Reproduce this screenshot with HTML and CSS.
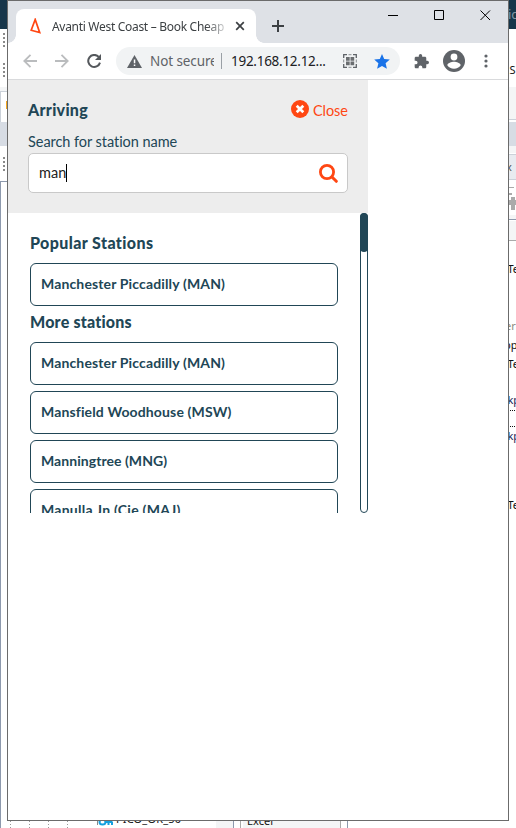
FILE: index.html
```html
<!DOCTYPE html>
<html lang="en">
<head>
<meta charset="utf-8">
<title>Avanti West Coast – Book Cheap</title>
<link rel="stylesheet" href="styles.css">
</head>
<body>
<div class="desktop">
  <div class="behind" aria-hidden="true">
    <svg width="516" height="828" viewBox="0 0 516 828">
      <path fill="#17364a" d="M0 0h8v29H0zM508 0h8v29h-8z"/>
      <path fill="#f4f5f6" d="M0 87h8v4H0zM508 87h8v33h-8zM508 145h8v8h-8zM508 215h8v4h-8zM508 221h8v19h-8zM216 820h17v8h-17zM243 820h97v8h-97z"/>
      <path fill="#d7dce4" d="M0 122h8v24H0zM508 122h8v24h-8z"/>
      <path fill="#e8ebf0" d="M508 154h8v25h-8z"/>
      <path fill="none" stroke="#8d99ad" d="M0 181.500h8M.5 181v647M508 219.500h8M233.500 820v8M347.500 820v8"/>
      <path fill="none" stroke="#cbd1d9" d="M.5 91v31M0 91.500h8M508 119.500h8M508 154.500h8M508 179.500h8"/>
      <path fill="none" stroke="#aaa" d="M508 240.500h8M240.500 820v8M340.500 820v8"/>
      <path fill="none" stroke="#8a8a8a" stroke-width="2" stroke-dasharray="2 2" d="M4 33v15M4 63v15M4 157v15"/>
      <path fill="none" stroke="#999" stroke-dasharray="1 2" d="M10.500 821v7M29.500 821v7M48.500 821v7M67.500 821v7"/>
      <path fill="none" stroke="#111" stroke-dasharray="1 1" d="M508 410.500h8M508 426.500h8"/>
      <path fill="#f5a820" d="M6 101h1v8H6z"/>
      <path fill="#aaa" d="M508 187h6v1h-6zM508 193h4v2h-4zM508 200h8v5h-8zM511 197h4v13h-4z"/>
      <path fill="none" stroke="#15a0df" stroke-width="2" d="M99.500 822a3 2.500 0 1 0 6 0a3 2.500 0 1 0-6 0M105 822h7.500M108.500 822v3M112 822v3"/>
      <path stroke="#888" d="M97.500 820v5"/>
      <text class="scrap scrap-light" x="508" y="19">ic</text>
      <text class="scrap" x="509.500" y="74">S</text>
      <text class="scrap scrap-light2" x="506" y="171">x</text>
      <text class="scrap" x="507.500" y="273">Te</text>
      <text class="scrap scrap-muted" x="505" y="330">er</text>
      <text class="scrap" x="504" y="349">pp</text>
      <text class="scrap" x="507.500" y="368">Te</text>
      <text class="scrap scrap-navy" x="507.500" y="404">kp</text>
      <text class="scrap scrap-navy" x="507.500" y="440">kp</text>
      <text class="scrap" x="507.500" y="509">Te</text>
      <text class="scrap" x="116" y="823" textLength="65">PICO_OR_50</text>
      <text class="scrap" x="247" y="825">Excel</text>
    </svg>
  </div>

  <div class="window">
    <div class="tabstrip">
      <div class="tab">
        <svg class="favicon" width="12" height="16" viewBox="0 0 12 16"><path d="M5.200 1.500 1.200 12.200l8.500 2.400L5.200 1.500Z" fill="none" stroke="#ff4713" stroke-width="1.700"/></svg>
        <span class="tab-title">Avanti West Coast – Book Cheap</span>
        <svg class="tab-close" width="10" height="10" viewBox="0 0 10 10"><path d="m1.200 1.200 7.600 7.600m0-7.600L1.200 8.800" stroke="#3c4043" stroke-width="1.700"/></svg>
      </div>
      <svg class="plus" width="12" height="12" viewBox="0 0 12 12"><path d="M6 0v12M0 6h12" stroke="#3c4043" stroke-width="2"/></svg>
      <div class="controls">
        <svg width="11" height="11" viewBox="0 0 11 11"><path d="M0 5.500h10" stroke="#000"/></svg>
        <svg width="11" height="11" viewBox="0 0 11 11"><path d="M.5.500h9v9h-9z" fill="none" stroke="#000"/></svg>
        <svg width="11" height="11" viewBox="0 0 11 11"><path d="m.5.500 9.500 9.500m0-9.500L.5 10" stroke="#000"/></svg>
      </div>
    </div>

    <div class="toolbar">
      <svg class="back" width="14" height="14" viewBox="0 0 14 14"><path d="M14 7H1.500M7.500.800 1.300 7l6.200 6.200" fill="none" stroke="#babcbe" stroke-width="1.800"/></svg>
      <svg class="forward" width="14" height="14" viewBox="0 0 14 14"><path d="M0 7h12.500M6.500.800 12.700 7l-6.200 6.200" fill="none" stroke="#babcbe" stroke-width="1.800"/></svg>
      <svg class="reload" width="15" height="14" viewBox="0 0 15 14"><path d="M13 8.600A6 6 0 1 1 11.700 2.900" fill="none" stroke="#54585c" stroke-width="2"/><path d="M14 0v6H8z" fill="#54585c"/></svg>
      <div class="omnibox">
        <svg class="warning" width="15" height="13" viewBox="0 0 15 13"><path d="M7.500 0 15 13H0z" fill="#5f6368"/><path d="M6.800 4.500h1.500v3.700H6.800zM6.800 9.500h1.500V11H6.800z" fill="#fff"/></svg>
        <span class="insecure">Not secure</span>
        <span class="divider"></span>
        <span class="url">192.168.12.12...</span>
        <svg class="qr" width="14" height="14" viewBox="0 0 14 14"><path d="M.7 4V.700H4M10 .700h3.300V4M13.300 10v3.300H10M4 13.300H.700V10" fill="none" stroke="#5f6368" stroke-width="1.300"/><path d="M5.500.700h3M5.500 13.300h3M.700 5.500v3M13.300 5.500v3" stroke="#8b8e92"/><path d="M3 3h3.700v3.700H3zM7.500 3h3.700v3.700H7.500zM3 7.500h3.700v3.700H3zM7.500 7.500h3.700v3.700H7.500z" fill="#6a6d70"/></svg>
        <svg class="star" width="16" height="15" viewBox="0 0 16 15"><path d="m8 0 2.200 5.100 5.600.500-4.200 3.700 1.300 5.500L8 11.900l-4.900 2.900 1.300-5.500L.2 5.600l5.600-.5z" fill="#1a73e8"/></svg>
      </div>
      <svg class="puzzle" width="15" height="15" viewBox="1 1 22 22"><path fill="#5f6368" d="M20.500 11H19V7c0-1.100-.9-2-2-2h-4V3.500a2.500 2.500 0 0 0-5 0V5H4c-1.100 0-2 .9-2 2v3.800h1.500a2.700 2.700 0 0 1 0 5.400H2V20c0 1.100.9 2 2 2h3.800v-1.500a2.700 2.700 0 0 1 5.400 0V22H17c1.100 0 2-.9 2-2v-4h1.500a2.500 2.500 0 0 0 0-5z"/></svg>
      <svg class="avatar" width="22" height="22" viewBox="0 0 22 22"><circle cx="11" cy="11" r="11" fill="#5f6368"/><circle cx="11" cy="7" r="3.400" fill="#fff"/><path d="M4.300 15.200c0-2.300 4.400-3.500 6.700-3.500s6.700 1.200 6.700 3.500c-1.400 2.200-3.900 3.600-6.700 3.600s-5.300-1.400-6.700-3.600Z" fill="#fff"/></svg>
      <svg class="dots" width="4" height="14" viewBox="0 0 4 14"><g fill="#5f6368"><circle cx="2" cy="2" r="1.600"/><circle cx="2" cy="7" r="1.600"/><circle cx="2" cy="12" r="1.600"/></g></svg>
    </div>

    <main class="panel">
      <header class="search">
        <div class="heading">
          <h1>Arriving</h1>
          <a class="close"><svg width="18" height="18" viewBox="0 0 18 18"><circle cx="9" cy="9" r="9" fill="#ff4713"/><path d="m5.700 5.700 6.600 6.600m0-6.600-6.600 6.600" stroke="#fff" stroke-width="2.700"/></svg><span>Close</span></a>
        </div>
        <label>Search for station name</label>
        <div class="field">
          <span class="value">man</span><span class="caret"></span>
          <svg class="glass" width="19" height="19" viewBox="0 0 19 19"><circle cx="8" cy="8" r="6.600" fill="none" stroke="#ff4713" stroke-width="2.800"/><path d="m13 13 4.300 4.300" stroke="#ff4713" stroke-width="3" stroke-linecap="round"/></svg>
        </div>
      </header>
      <div class="results">
        <div class="list">
          <h2 class="popular">Popular Stations</h2>
          <div class="station">Manchester Piccadilly (MAN)</div>
          <h2 class="more">More stations</h2>
          <div class="station">Manchester Piccadilly (MAN)</div>
          <div class="station">Mansfield Woodhouse (MSW)</div>
          <div class="station manningtree">Manningtree (MNG)</div>
          <div class="station manulla">Manulla Jn (Cie (MAJ)</div>
        </div>
        <div class="track"><div class="thumb"></div></div>
      </div>
    </main>
  </div>
</div>
</body>
</html>
```
FILE: styles.css
```css
* { box-sizing: border-box; }
body { margin: 0; background: #fff; overflow: hidden; font-variant-ligatures: none; }
svg { display: block; flex: none; }
.desktop { position: relative; width: 516px; height: 828px; overflow: hidden; padding-left: 7px; }
.behind { position: absolute; left: 0; top: 0; }
.scrap { font: 11px "Noto Sans", sans-serif; fill: #111; }
.scrap-light { fill: #8496a4; font-size: 13px; }
.scrap-light2 { fill: #555; }
.scrap-muted { fill: #8b8b7d; }
.scrap-navy { fill: #152457; }

.window { position: relative; width: 502px; height: 821px; border: 1px solid #6b6b6b; background: #fff; }

.tabstrip { display: flex; height: 42px; padding: 8px 17px 0 8px; background: #dee1e6; }
.tab { position: relative; display: flex; align-items: center; width: 240px; height: 34px; padding: 0 11px 0 14px; background: #fff; border-radius: 8px 8px 0 0; font: 12px "Noto Sans", sans-serif; color: #3c4043; }
.tab::before, .tab::after { content: ""; position: absolute; bottom: 0; width: 8px; height: 8px; }
.tab::before { left: -8px; background: radial-gradient(circle at 0 0, transparent 7.5px, #fff 8px); }
.tab::after { right: -8px; background: radial-gradient(circle at 100% 0, transparent 7.5px, #fff 8px); }
.tab-title { width: 174px; margin-left: 10px; overflow: hidden; white-space: nowrap; letter-spacing: -0.3px; -webkit-mask-image: linear-gradient(90deg, #000 154px, transparent 178px); mask-image: linear-gradient(90deg, #000 154px, transparent 178px); }
.tab-close { margin-left: 9px; }
.plus { margin: 11px 0 0 16px; }
.controls { display: flex; gap: 35px; margin: 1px 0 0 auto; }

.toolbar { display: flex; align-items: center; height: 37px; padding-left: 15px; border-bottom: 1px solid #d9dadc; background: #fff; }
.forward { margin-left: 18px; }
.reload { margin-left: 18px; }
.omnibox { display: flex; align-items: center; width: 284px; height: 28px; margin-left: 14px; padding-left: 11px; border-radius: 14px; background: #f1f3f4; font: 13.500px/20px "Noto Sans", sans-serif; white-space: nowrap; }
.insecure { width: 64px; margin-left: 8px; overflow: hidden; color: #5f6368; letter-spacing: -0.1px; }
.divider { width: 1px; height: 16px; margin-left: 7px; background: #9aa0a6; }
.url { width: 96px; margin-left: 9px; color: #202124; letter-spacing: -0.27px; }
.qr { margin-left: 16px; }
.star { margin-left: 17px; }
.puzzle { margin-left: 14px; }
.avatar { margin-left: 14px; }
.dots { margin-left: 19px; }

.panel { width: 360px; font-family: Lato, sans-serif; color: #214656; }
.search { height: 133px; padding: 20px 20px 0; background: #ededed; }
.heading { display: flex; justify-content: space-between; height: 32px; }
h1, h2 { margin: 0; font-weight: 900; font-size: 16px; }
h1 { line-height: 20px; letter-spacing: 0.28px; }
.close { display: flex; gap: 4px; height: 19px; color: #ff4713; font-size: 14.500px; line-height: 21px; }
.close span { width: 35px; letter-spacing: -0.1px; }
label { display: block; height: 21px; font-size: 14.500px; line-height: 20px; letter-spacing: -0.05px; }
.field { display: flex; align-items: center; height: 40px; padding: 0 9px 0 10px; border: 1px solid #c9c9c9; border-radius: 5px; background: #fff; color: #222; font-size: 14.500px; }
.value { padding-bottom: 2px; }
.caret { width: 1px; height: 18px; background: #000; }
.glass { margin-left: auto; }

.results { display: flex; justify-content: space-between; height: 300px; overflow: hidden; }
.list { width: 308px; margin-left: 22px; padding-top: 19px; }
h2 { height: 21px; line-height: 21px; }
h2.popular { margin-bottom: 10px; letter-spacing: 0.4px; }
h2.more { margin: -1px 0 10px; letter-spacing: 0.2px; }
.station { height: 43px; margin-bottom: 6px; padding: 0 0 2px 10px; border: 1px solid #214656; border-radius: 6px; font-size: 14px; font-weight: 700; line-height: 39px; letter-spacing: 0.14px; white-space: nowrap; }
.station.manningtree { letter-spacing: 0.05px; }
.station.manulla { letter-spacing: 0.26px; }
.track { width: 8px; height: 300px; border: 1px solid #214656; border-radius: 4px; }
.thumb { width: 8px; height: 39px; margin: -1px; border-radius: 4px; background: #214656; }
```
